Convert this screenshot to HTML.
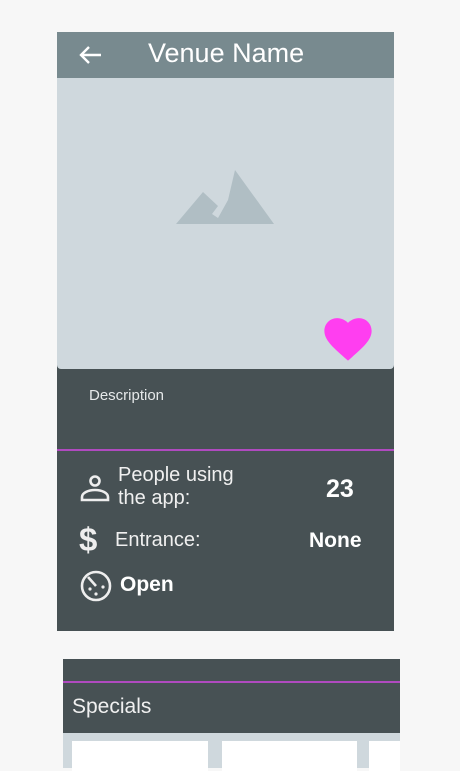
<!DOCTYPE html>
<html><head><style>
body{margin:0;width:460px;height:768px;background:#f7f7f7;font-family:"Liberation Sans",sans-serif;position:relative;overflow:hidden}
.a{position:absolute}
</style></head><body>
<div class="a" style="left:57px;top:32px;width:337px;height:599px;background:#475154">
 <div class="a" style="left:0;top:0;width:337px;height:46px;background:#788a8f"></div>
 <svg class="a" style="left:20px;top:12px" width="26" height="22" viewBox="0 0 26 22"><path d="M24 11H4M12 3L4 11l8 8" stroke="#fff" stroke-width="2.4" fill="none"/></svg>
 <div class="a" style="left:91px;top:6px;color:#fff;font-size:27px">Venue Name</div>
 <div class="a" style="left:0;top:46px;width:337px;height:291px;background:#cfd8dd;border-radius:0 0 4px 4px"></div>
 <svg class="a" style="left:119px;top:138px" width="100" height="56" viewBox="0 0 100 56"><path d="M0 54L27 22 42 36 36 44 42 48 52 30 59 0 98 54Z" fill="#b0bec4"/></svg>
 <svg class="a" style="left:264px;top:280px" width="54" height="50" viewBox="0 0 24 22"><path d="M12 21.5l-1.5-1.3C5 15.4 1.5 12.2 1.5 8.3 1.5 5.1 4 2.6 7.2 2.6c1.8 0 3.5.8 4.8 2.1 1.3-1.3 3-2.1 4.8-2.1 3.2 0 5.7 2.5 5.7 5.7 0 3.9-3.5 7.1-9 11.9z" fill="#ff3ef0"/></svg>
 <div class="a" style="left:32px;top:355px;color:#e6e9ea;font-size:15px">Description</div>
 <div class="a" style="left:0;top:417px;width:337px;height:2px;background:#b04ac0"></div>
 <svg class="a" style="left:22px;top:440px" width="32" height="32" viewBox="0 0 32 32"><circle cx="16" cy="9" r="4.5" stroke="#eee" stroke-width="2.6" fill="none"/><path d="M3 28v-3c0-4 6-7 13-7s13 3 13 7v3z" stroke="#eee" stroke-width="2.6" fill="none"/></svg>
 <div class="a" style="left:61px;top:432px;color:#f0f0f0;font-size:20px;line-height:23px">People using<br>the app:</div>
 <div class="a" style="left:269px;top:443px;color:#fff;font-size:25px;font-weight:bold">23</div>
 <div class="a" style="left:22px;top:491px;color:#eee;font-size:33px;line-height:34px;font-weight:bold">$</div>
 <div class="a" style="left:58px;top:497px;color:#f0f0f0;font-size:20px">Entrance:</div>
 <div class="a" style="left:252px;top:497px;color:#fff;font-size:21px;font-weight:bold">None</div>
 <svg class="a" style="left:22px;top:537px" width="34" height="34" viewBox="0 0 34 34"><circle cx="17" cy="17" r="14" stroke="#eee" stroke-width="2.6" fill="none"/><path d="M17 17L9 8" stroke="#eee" stroke-width="2.6"/><circle cx="11" cy="20" r="1.6" fill="#eee"/><circle cx="17" cy="25" r="1.6" fill="#eee"/><circle cx="24" cy="18" r="1.6" fill="#eee"/></svg>
 <div class="a" style="left:63px;top:541px;color:#fff;font-size:21px;font-weight:bold">Open</div>
</div>
<div class="a" style="left:63px;top:659px;width:337px;height:109px;background:#475154">
 <div class="a" style="left:0;top:22px;width:337px;height:2px;background:#b04ac0"></div>
 <div class="a" style="left:9px;top:36px;color:#f0f0f0;font-size:21px">Specials</div>
 <div class="a" style="left:0;top:74px;width:337px;height:35px;background:#cfd8dd">
  <div class="a" style="left:9px;top:8px;width:136px;height:30px;background:#fff"></div>
  <div class="a" style="left:159px;top:8px;width:135px;height:30px;background:#fff"></div>
  <div class="a" style="left:306px;top:8px;width:31px;height:30px;background:#fff"></div>
 </div>
</div>
</body></html>
